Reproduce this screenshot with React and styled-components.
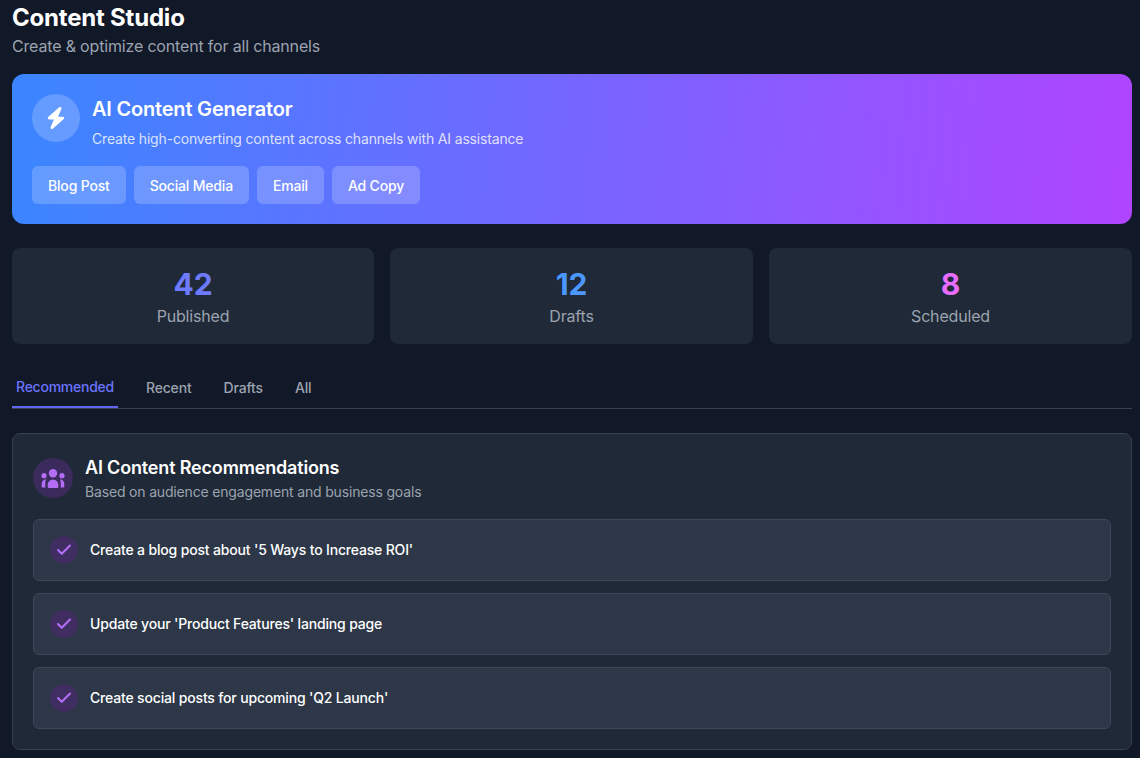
import React from 'react';
import styled, { createGlobalStyle } from 'styled-components';
import { FaBolt } from 'react-icons/fa6';
import { Check as CheckIcon } from 'lucide-react';

const GlobalStyle = createGlobalStyle`
  html, body { margin: 0; padding: 0; background: #111827; height: 100%; overflow: hidden; }
  body { font-family: Inter, "Liberation Sans", sans-serif; color: #fff; letter-spacing: -0.17px; }
`;

const stats = [
  { value: '42', label: 'Published', color: '#6f7bff' },
  { value: '12', label: 'Drafts', color: '#4b96ff' },
  { value: '8', label: 'Scheduled', color: '#e86cff' },
];

const types = ['Blog Post', 'Social Media', 'Email', 'Ad Copy'];
const tabs = ['Recommended', 'Recent', 'Drafts', 'All'];
const recommendations = [
  "Create a blog post about '5 Ways to Increase ROI'",
  "Update your 'Product Features' landing page",
  "Create social posts for upcoming 'Q2 Launch'",
];

// three people, the middle one bigger
const GroupIcon = () => (
  <svg width="24" height="21" viewBox="0 0 24 21" fill="currentColor">
    <circle cx="12" cy="5.3" r="4.2" />
    <circle cx="3" cy="7.7" r="2.6" />
    <circle cx="21" cy="7.7" r="2.6" />
    <path d="M7.6 20a.9.9 0 0 1-.9-.9V16.8a5.3 5.3 0 0 1 10.6 0v2.3a.9.9 0 0 1-.9.9z" />
    <path d="M1.6 19.6a.9.9 0 0 1-.9-.9V16c0-2.7 1.6-4.5 4.4-4.7-.6 1.4-.8 2.8-.8 4.7v3.6z" />
    <path d="M22.4 19.6a.9.9 0 0 0 .9-.9V16c0-2.7-1.6-4.5-4.4-4.7.6 1.4.8 2.8.8 4.7v3.6z" />
  </svg>
);

const App = () => {
  return (
    <Page>
      <GlobalStyle />
      <Header>
        <Title>Content Studio</Title>
        <Subtitle>Create &amp; optimize content for all channels</Subtitle>
      </Header>

      <Hero>
        <HeroTop>
          <HeroIcon><FaBolt size={22} /></HeroIcon>
          <div>
            <HeroTitle>AI Content Generator</HeroTitle>
            <HeroText>Create high-converting content across channels with AI assistance</HeroText>
          </div>
        </HeroTop>
        <HeroButtons>
          {types.map(t => <HeroButton key={t}>{t}</HeroButton>)}
        </HeroButtons>
      </Hero>

      <Stats>
        {stats.map(s => (
          <StatCard key={s.label}>
            <StatValue color={s.color}>{s.value}</StatValue>
            <StatLabel>{s.label}</StatLabel>
          </StatCard>
        ))}
      </Stats>

      <Tabs>
        {tabs.map((t, i) => <Tab key={t} $active={i === 0}>{t}</Tab>)}
      </Tabs>

      <Panel>
        <PanelHead>
          <PanelIcon><GroupIcon /></PanelIcon>
          <div>
            <PanelTitle>AI Content Recommendations</PanelTitle>
            <PanelText>Based on audience engagement and business goals</PanelText>
          </div>
        </PanelHead>
        <List>
          {recommendations.map(r => (
            <Item key={r}>
              <Check><CheckIcon size={18} strokeWidth={2.8} /></Check>
              <ItemText>{r}</ItemText>
            </Item>
          ))}
        </List>
      </Panel>
    </Page>
  );
};

export default App;

const Page = styled.div`
  box-sizing: border-box;
  width: 1140px;
  padding: 0 8px 0 12px;
`;

const Header = styled.div`
  margin-bottom: 18px;
`;

const Title = styled.h1`
  margin: 0;
  font-size: 24px;
  line-height: 36px;
  font-weight: 700;
  letter-spacing: -0.2px;
  color: #fff;
`;

const Subtitle = styled.p`
  margin: 0;
  font-size: 16px;
  line-height: 20px;
  color: #9ca3af;
`;

const Hero = styled.div`
  box-sizing: border-box;
  height: 150px;
  padding: 20px;
  border-radius: 12px;
  background: linear-gradient(95deg, #3a86ff, #b045ff);
`;

const HeroTop = styled.div`
  display: flex;
  align-items: flex-start;
  gap: 12px;
  margin-bottom: 17px;
`;

const HeroIcon = styled.div`
  width: 48px;
  height: 48px;
  border-radius: 50%;
  background: rgba(255, 255, 255, 0.2);
  display: flex;
  align-items: center;
  justify-content: center;
  color: #fff;
`;

const HeroTitle = styled.h2`
  margin: 0 0 5px;
  font-size: 20px;
  line-height: 30px;
  font-weight: 600;
  letter-spacing: -0.2px;
`;

const HeroText = styled.p`
  margin: 0;
  font-size: 14px;
  line-height: 20px;
  color: rgba(255, 255, 255, 0.8);
`;

const HeroButtons = styled.div`
  display: flex;
  gap: 8px;
`;

const HeroButton = styled.button`
  height: 38px;
  padding: 0 16px;
  border: 0;
  border-radius: 6px;
  background: rgba(255, 255, 255, 0.2);
  color: #fff;
  font: 500 14px Inter, sans-serif;
  letter-spacing: -0.18px;
`;

const Stats = styled.div`
  display: grid;
  grid-template-columns: 362px 363px 363px;
  gap: 16px;
  margin-top: 24px;
`;

const StatCard = styled.div`
  box-sizing: border-box;
  height: 96px;
  padding-top: 2px;
  border-radius: 8px;
  background: #1f2937;
  display: flex;
  flex-direction: column;
  align-items: center;
  justify-content: center;
`;

const StatValue = styled.div`
  font-size: 30px;
  line-height: 36px;
  font-weight: 700;
  color: ${props => props.color};
`;

const StatLabel = styled.div`
  margin-top: 2px;
  font-size: 16px;
  line-height: 24px;
  color: #9ca3af;
`;

const Tabs = styled.div`
  display: flex;
  gap: 24px;
  margin-top: 24px;
  height: 41px;
  box-sizing: border-box;
  border-bottom: 1px solid #374151;
`;

const Tab = styled.div`
  height: 40px;
  box-sizing: border-box;
  padding: ${props => props.$active ? '10px' : '11px'} 4px 0;
  font-size: 14px;
  line-height: 17px;
  font-weight: 500;
  letter-spacing: ${props => props.$active ? '-0.25px' : '-0.17px'};
  color: ${props => props.$active ? '#6c74ff' : '#9ca3af'};
  border-bottom: ${props => props.$active ? '2px solid #6366f1' : '0'};
`;

const Panel = styled.div`
  box-sizing: border-box;
  height: 317px;
  margin-top: 24px;
  padding: 21px 20px;
  border: 1px solid #374151;
  border-radius: 8px;
  background: #1f2937;
`;

const PanelHead = styled.div`
  display: flex;
  align-items: flex-start;
  gap: 12px;
  margin-bottom: 17px;
`;

const PanelIcon = styled.div`
  width: 40px;
  height: 40px;
  margin-top: 3px;
  border-radius: 50%;
  background: #3b2a5c;
  display: flex;
  align-items: center;
  justify-content: center;
  color: #b46ef5;
`;

const PanelTitle = styled.h3`
  margin: 0 0 1px;
  font-size: 18px;
  line-height: 26px;
  font-weight: 600;
`;

const PanelText = styled.p`
  margin: 0;
  font-size: 14px;
  line-height: 20px;
  color: #9ca3af;
`;

const List = styled.div`
  display: flex;
  flex-direction: column;
  gap: 12px;
`;

const Item = styled.div`
  box-sizing: border-box;
  height: 62px;
  padding: 0 16px;
  border: 1px solid #3d4757;
  border-radius: 6px;
  background: #2d3748;
  display: flex;
  align-items: center;
  gap: 12px;
`;

const Check = styled.div`
  width: 28px;
  height: 28px;
  border-radius: 50%;
  background: #402d62;
  display: flex;
  align-items: center;
  justify-content: center;
  color: #b46ef5;
`;

const ItemText = styled.span`
  font-size: 14px;
  line-height: 20px;
  font-weight: 500;
  color: #fff;
`;
